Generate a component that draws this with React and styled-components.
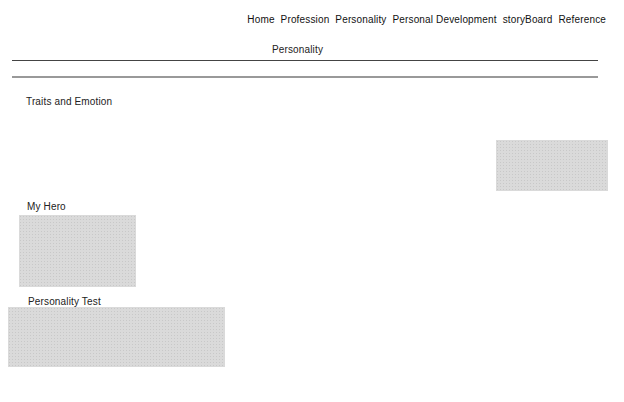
import styled, { createGlobalStyle } from 'styled-components'

const GlobalStyle = createGlobalStyle`
    html, body {
        margin: 0;
        padding: 0;
        background: #fff;
    }
    body {
        font-family: "Liberation Sans", Arial, sans-serif;
        color: #222;
        letter-spacing: 0.15px;
    }
`

const links = ['Home', 'Profession', 'Personality', 'Personal Development', 'storyBoard', 'Reference']

export default function App() {
    return (
        <Page>
            <GlobalStyle />
            <Nav>
                {links.map((link, index) => (
                    <NavLink key={index}>{link}</NavLink>
                ))}
            </Nav>
            <Title>Personality</Title>
            <Rule />
            <Rule $thick />
            <Section $top="18px">
                <Heading $left="26px">Traits and Emotion</Heading>
                <Right>
                    <Picture $width="112px" $height="51px" />
                </Right>
            </Section>
            <Section $top="10px">
                <Heading $left="27px">My Hero</Heading>
                <Picture $width="117px" $height="72px" $left="19px" />
            </Section>
            <Section $top="9px">
                <Heading $left="28px" $gap="-1px">Personality Test</Heading>
                <Picture $width="217px" $height="60px" $left="8px" />
            </Section>
        </Page>
    )
}

const Page = styled.div`
    width: 624px;
    height: 402px;
    overflow: hidden;
    padding-top: 14px;
    box-sizing: border-box;
`
const Nav = styled.nav`
    display: flex;
    justify-content: flex-end;
    gap: 6px;
    padding-right: 18px;
`
const NavLink = styled.span`
    font-size: 10px;
    line-height: 12px;
    color: #111;
`
const Title = styled.h1`
    margin: 18px 0 0;
    font-size: 10px;
    font-weight: 400;
    line-height: 12px;
    text-align: center;
    padding-right: 29px;
`
const Rule = styled.hr`
    margin: ${(p) => (p.$thick ? '15px' : '4px')} 0 0 12px;
    width: 586px;
    border: none;
    height: ${(p) => (p.$thick ? '2px' : '1px')};
    background: ${(p) => (p.$thick ? '#999' : '#444')};
`
const Section = styled.section`
    display: flex;
    flex-direction: column;
    margin-top: ${(p) => p.$top};
`
const Heading = styled.h2`
    margin: 0 0 ${(p) => p.$gap || '2px'} ${(p) => p.$left};
    font-size: 10px;
    font-weight: 400;
    line-height: 12px;
`
const Right = styled.div`
    display: flex;
    justify-content: flex-end;
    padding-right: 16px;
    margin-top: 30px;
`
const Picture = styled.div`
    width: ${(p) => p.$width};
    height: ${(p) => p.$height};
    margin-left: ${(p) => p.$left || 0};
    background-color: #dadada;
    background-image: radial-gradient(#c8c8c8 0.6px, transparent 0.7px);
    background-size: 3px 3px;
`
